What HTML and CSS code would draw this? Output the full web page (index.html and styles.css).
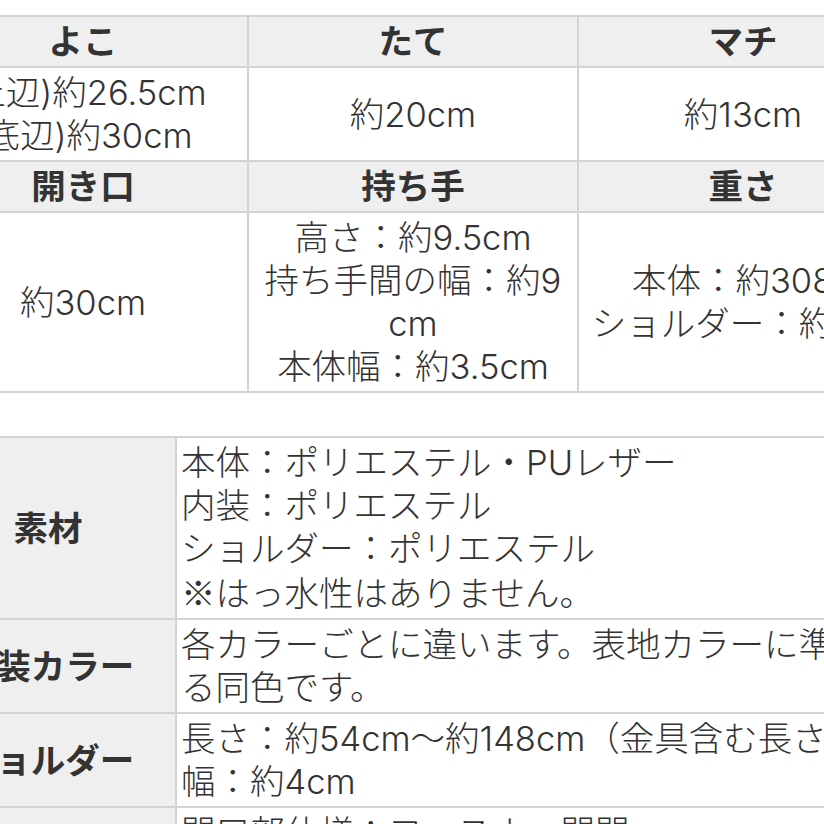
FILE: index.html
```html
<!DOCTYPE html>
<html lang="ja">
<head>
<meta charset="utf-8">
<link rel="stylesheet" href="styles.css">
</head>
<body>
<div class="viewport">
  <div class="sheet">
    <table class="size-table">
      <colgroup><col class="c3"><col class="c3"><col class="c3"></colgroup>
      <tr class="head"><th>よこ</th><th>たて</th><th>マチ</th></tr>
      <tr><td>(上辺)約26.5cm<br>(底辺)約30cm</td><td>約20cm</td><td>約13cm</td></tr>
      <tr class="head"><th>開き口</th><th>持ち手</th><th>重さ</th></tr>
      <tr><td>約30cm</td><td>高さ：約9.5cm<br>持ち手間の幅：約9cm<br>本体幅：約3.5cm</td><td>本体：約308g<br>ショルダー：約70g</td></tr>
    </table>

    <table class="spec-table">
      <colgroup><col class="label-col"><col></colgroup>
      <tr><th>素材</th><td>本体：ポリエステル・PUレザー<br>内装：ポリエステル<br>ショルダー：ポリエステル<br><span class="cjk">※</span>はっ水性はありません。</td></tr>
      <tr><th>内装カラー</th><td>各カラーごとに違います。表地カラーに準じる同色です。</td></tr>
      <tr><th>ショルダー</th><td>長さ：約54cm～約148cm（金具含む長さ）<br>幅：約4cm</td></tr>
      <tr><th>仕様</th><td>開口部仕様：ファスナー開閉<br>内側：ポケット×1</td></tr>
    </table>
  </div>
</div>
</body>
</html>
```

FILE: styles.css
```css
html, body {
  margin: 0;
  padding: 0;
  background: #ffffff;
}

.viewport {
  width: 824px;
  height: 824px;
  overflow: hidden;
}

.sheet {
  width: 990px;
  margin-left: -83px;
  padding-top: 15px;
  font-family: Inter, "Noto Sans CJK JP", sans-serif;
  color: #333333;
  font-size: 34.5px;
  line-height: 43px;
}

.cjk {
  font-family: "Noto Sans CJK JP", sans-serif;
}

table {
  border-collapse: collapse;
  width: 990px;
  table-layout: fixed;
}

th, td {
  border: 2px solid #d3d3d3;
  padding: 3px 8px;
}

td {
  font-weight: 300;
}

th {
  background: #efefef;
  font-weight: bold;
}

.size-table td,
.size-table th {
  text-align: center;
  vertical-align: middle;
}

.size-table td {
  word-break: break-all;
}

.c3 {
  width: 330px;
}

.spec-table {
  margin-top: 43px;
  margin-left: 2px;
}

.label-col {
  width: 256px;
}

.spec-table th {
  text-align: center;
  vertical-align: middle;
  white-space: nowrap;
}

.spec-table td {
  text-align: left;
  padding: 3px 6px 3px 4px;
}
```
